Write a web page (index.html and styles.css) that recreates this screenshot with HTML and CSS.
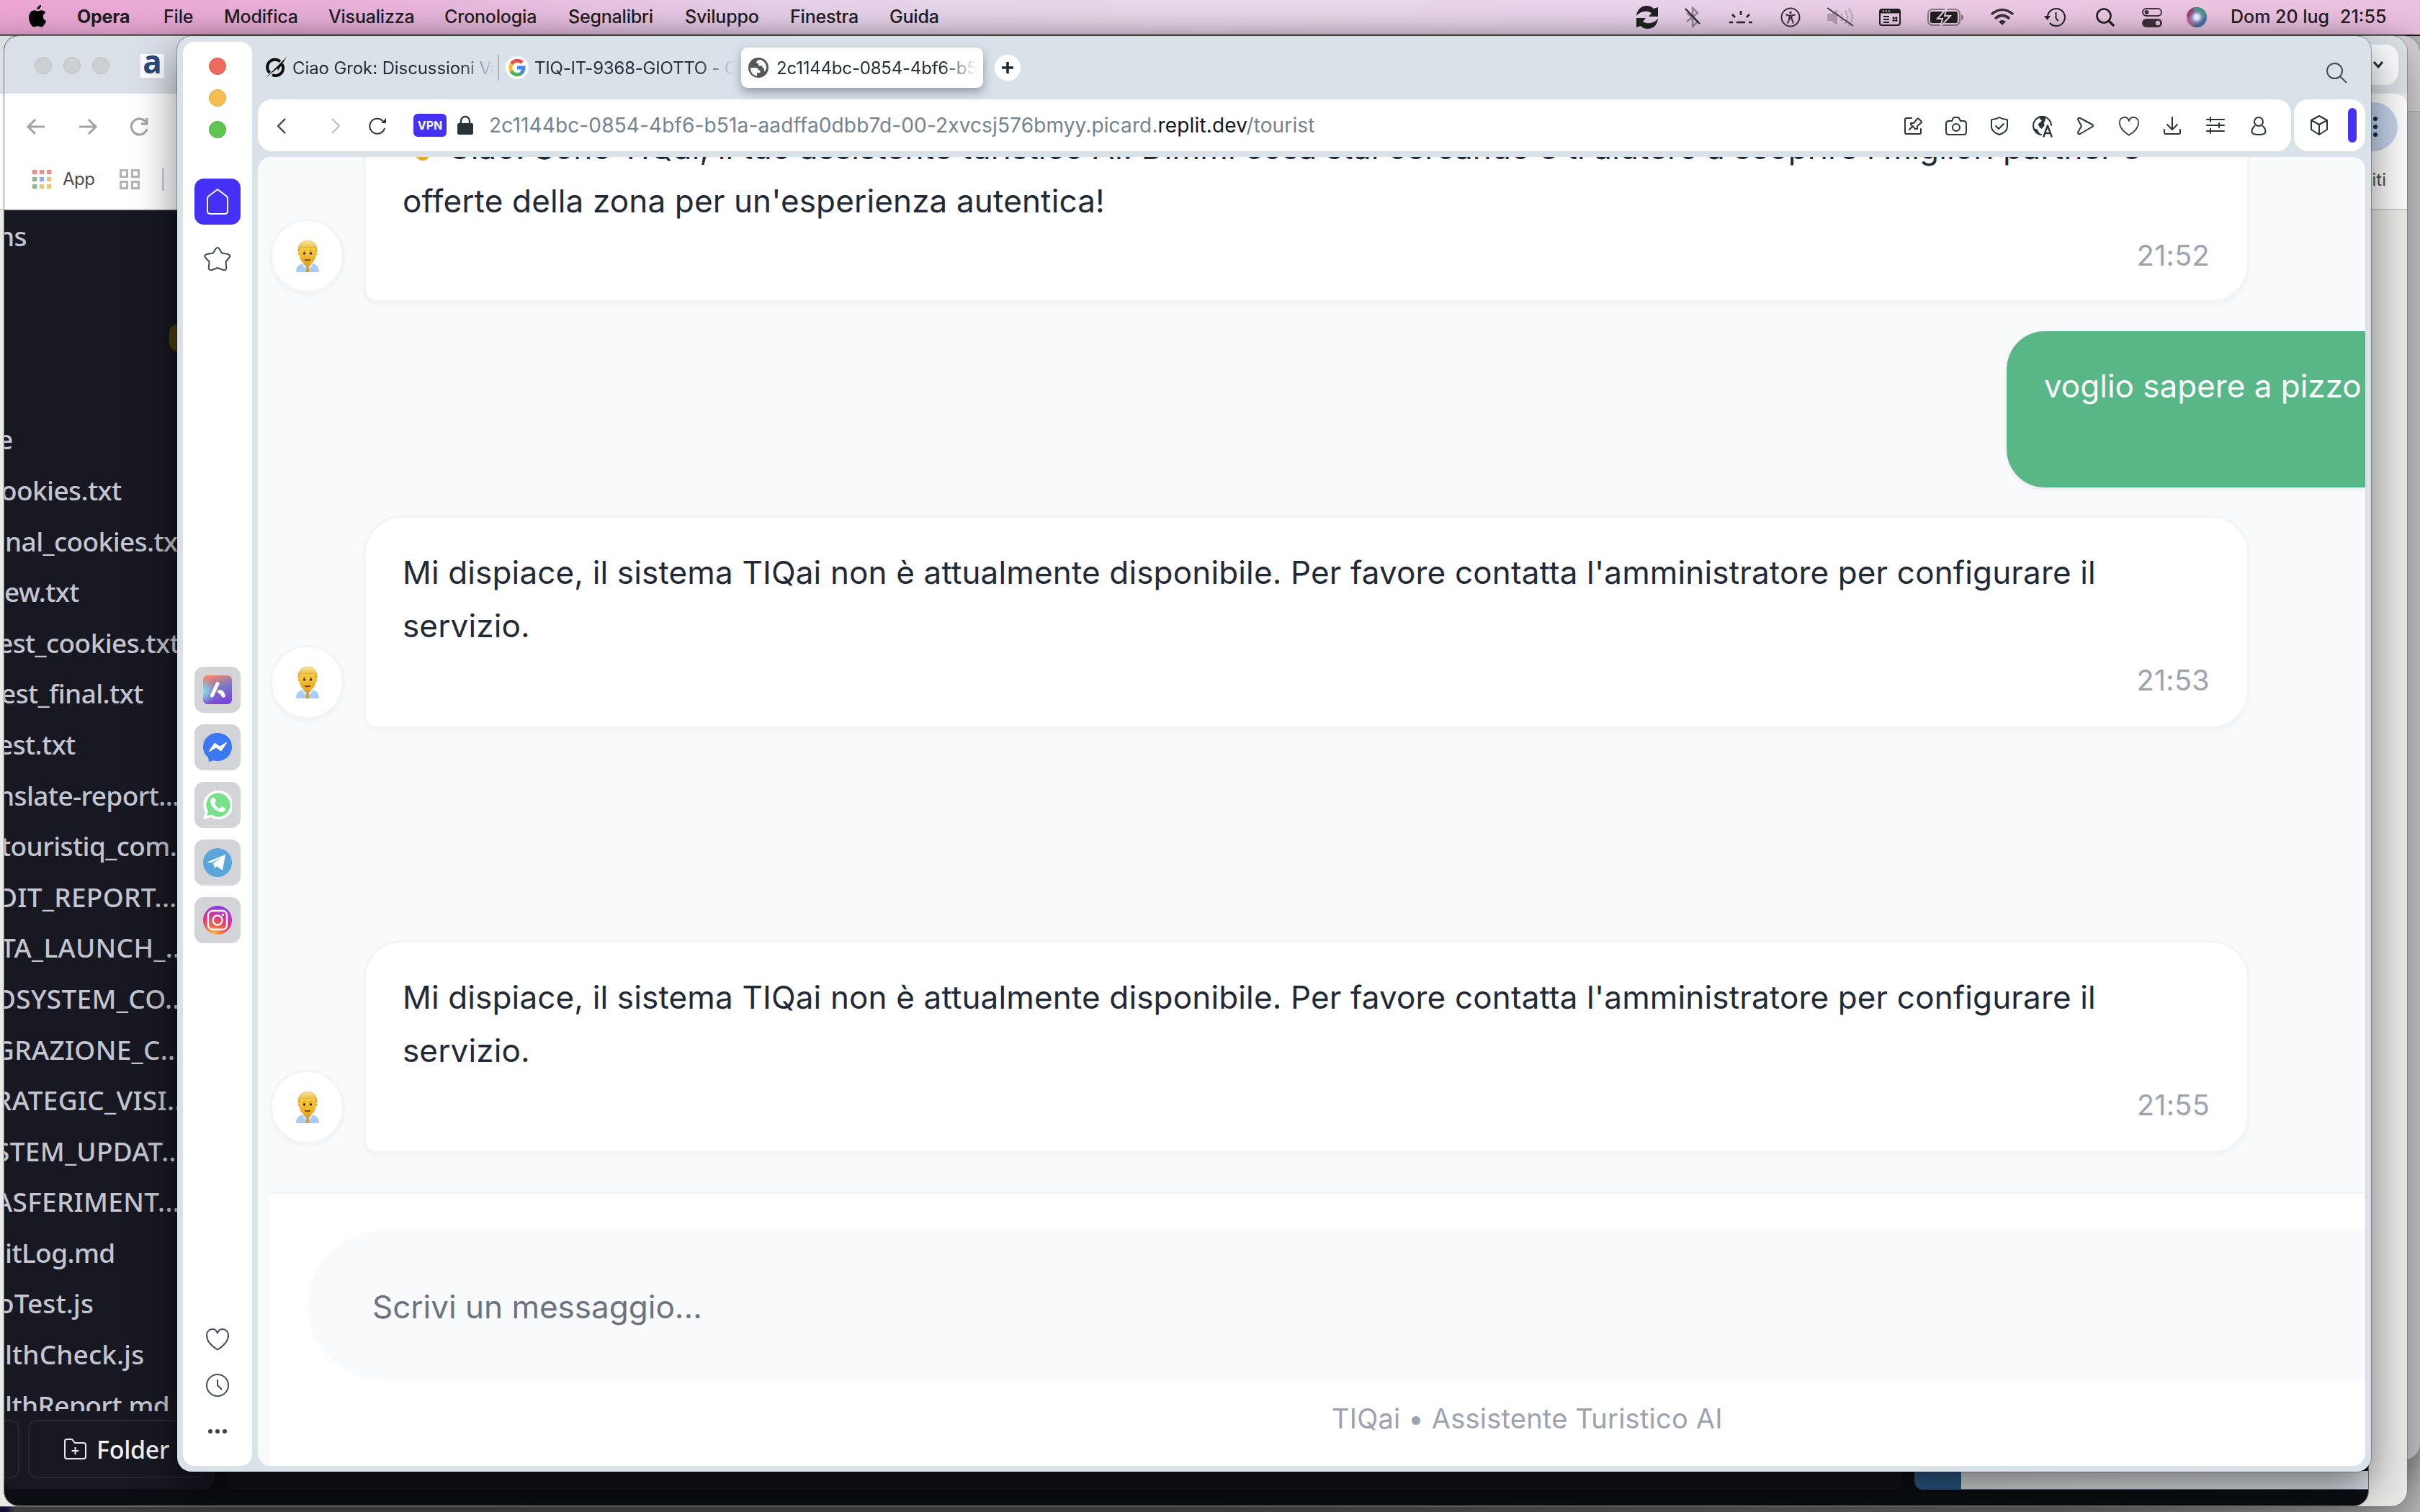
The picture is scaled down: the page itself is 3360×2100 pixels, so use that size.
FILE: index.html
```html
<!DOCTYPE html>
<html lang="it">
<head>
<meta charset="utf-8">
<title>TIQai</title>
<link rel="stylesheet" href="styles.css">
</head>
<body>
<svg class="defs" width="0" height="0">
  <defs>
    <linearGradient id="hair" x1="0" y1="0" x2="0" y2="1"><stop offset="0" stop-color="#fbe68c"/><stop offset="1" stop-color="#dba22c"/></linearGradient>
    <linearGradient id="face" x1="0" y1="0" x2="0" y2="1"><stop offset="0" stop-color="#fdd33d"/><stop offset="1" stop-color="#e8a425"/></linearGradient>
    <linearGradient id="aria" x1=".3" y1="0" x2=".6" y2="1"><stop offset="0" stop-color="#f08a62"/><stop offset=".45" stop-color="#7d78c4"/><stop offset="1" stop-color="#7a45dc"/></linearGradient>
    <radialGradient id="ariaGlow" cx="0" cy=".55" r=".45"><stop offset="0" stop-color="#8ee3f0"/><stop offset="1" stop-color="#8ee3f0" stop-opacity="0"/></radialGradient>
    <radialGradient id="insta" cx=".35" cy="1" r="1.05"><stop offset="0" stop-color="#fbc94a"/><stop offset=".3" stop-color="#f2694a"/><stop offset=".6" stop-color="#e0357f"/><stop offset=".85" stop-color="#b436d4"/><stop offset="1" stop-color="#6a3cf5"/></radialGradient>
    <radialGradient id="siri"><stop offset="0" stop-color="#fff"/><stop offset=".3" stop-color="#d6e4f5"/><stop offset=".65" stop-color="#8b8fd0" stop-opacity=".5"/><stop offset="1" stop-color="#5b6fa0" stop-opacity="0"/></radialGradient>
    <symbol id="man" viewBox="0 0 32 44">
      <path d="M0 44c0-8 4-11 10-12l6 2 6-2c6 1 10 4 10 12z" fill="#a9cdf0"/>
      <path d="M10 32l6 5 6-5 1 3-5 5-2-2-2 2-5-5z" fill="#d5e8fa"/>
      <path d="M14.500 36h3l1 8h-5z" fill="#d49a35"/>
      <path d="M11 27h10v6l-5 4-5-4z" fill="#dc9a22"/>
      <path d="M4.500 8h23v12c0 7-5.500 13.500-11.500 13.500S4.500 27 4.500 20z" fill="url(#face)"/>
      <circle cx="4.500" cy="18.500" r="2" fill="#f0b52f"/><circle cx="27.500" cy="18.500" r="2" fill="#f0b52f"/>
      <path d="M3 16C2 6 7 .5 16 .5S30 6 29 16l-1.800-1c0-3-.7-4.500-1.700-6-6 1.500-14 1.500-18.500 0-1 1.500-2 3-2.200 6z" fill="url(#hair)" stroke="#d9a336" stroke-width=".6"/>
      <path d="M9.500 14.500h4M18.500 14.500h4" stroke="#b07a20" stroke-width="1.200"/>
      <circle cx="11.500" cy="18" r="1.700" fill="#33230f"/><circle cx="20.500" cy="18" r="1.700" fill="#33230f"/>
      <path d="M12 26.500q4 1.800 8 0" stroke="#6b3c12" stroke-width="1.800" fill="none"/>
    </symbol>
  </defs>
</svg>

<header class="menubar">
  <nav class="menus">
    <svg width="28" height="34" viewBox="0 0 28 34"><path d="M19 1c.3 3-2.500 6.500-5.700 6.500C13 4.500 15.700 1.500 19 1zM14 9.500c1.300 0 3-1.300 5.500-1.300 2.200 0 4.400 1.200 5.700 3.200-5 3-4 9.800.9 11.700-1.300 3.700-4 8.400-6.800 8.400-2 0-2.700-1.200-5-1.200-2.400 0-3.200 1.200-5 1.200C6 31.500 2 24.500 2 18.500c0-6.500 4-10.200 7.500-10.200 2 0 3.500 1.200 4.500 1.200z"/></svg>
    <b>Opera</b><span>File</span><span>Modifica</span><span>Visualizza</span><span>Cronologia</span><span>Segnalibri</span><span>Sviluppo</span><span>Finestra</span><span>Guida</span>
  </nav>
  <div class="status">
    <svg width="32" height="34" viewBox="0 0 32 34"><path d="M1 15C2 6 8 1 15 1c4 0 7 1 10 4l6-2v13H18l4-5c-6-4-15-3-21 4zM31 19c-1 9-7 14-14 14-4 0-7-1-10-4l-6 2V18h13l-4 5c6 4 15 3 21-4z"/></svg>
    <svg width="24" height="30" viewBox="0 0 24 30" fill="none"><path d="M4 9l15 12-7 7V2l7 7L4 21" stroke="#928296" stroke-width="2.500"/><path d="M2 3l20 21" stroke="#222" stroke-width="2"/></svg>
    <svg width="34" height="20" viewBox="0 0 34 20" fill="none" stroke="#222" stroke-width="2.600"><path d="M17 1v6M5 6l4 4M29 6l-4 4M1 17h5M11 17h12M28 17h5"/></svg>
    <svg width="28" height="28" viewBox="0 0 28 28" fill="none" stroke="#3a3139" stroke-width="2"><circle cx="14" cy="14" r="12.500"/><circle cx="14" cy="7.500" r="1.300" fill="#3a3139" stroke-width="1"/><path d="M7.500 10.500l5 1v4l-2.500 7M20.500 10.500l-5 1v4l2.500 7M12 11.500h4M12.500 15h3"/></svg>
    <svg width="38" height="30" viewBox="0 0 38 30" fill="none" stroke="#b79fb5" stroke-width="2.400"><path d="M1 10h6l8-6v22l-8-6H1z" fill="#b79fb5" stroke="none"/><path d="M20 10q3 5 0 10M26 6q6 9 0 18M31 3q9 12 0 24" stroke-dasharray="3 1"/><path d="M1 2l36 25" stroke="#51464f" stroke-width="2"/></svg>
    <svg width="30" height="26" viewBox="0 0 30 26" fill="none" stroke="#222" stroke-width="2"><rect x="1" y="2" width="28" height="22" rx="3"/><path d="M2 5h26" stroke-width="5"/><path d="M5 4.500h2M9 4.500h2M13 4.500h2" stroke="#eccce4"/><path d="M6 12h8M6 16h8M6 20h8"/><path d="M20 12v7M24 12v7M18.500 14h7M18.500 17.500h7" stroke-width="1.500"/></svg>
    <svg width="52" height="28" viewBox="0 0 52 28"><rect x="2" y="3" width="44" height="22" rx="6" fill="none" stroke="#8a7888" stroke-width="2"/><rect x="5" y="6" width="38" height="16" rx="3" fill="#222"/><path d="M48 10v8q3-1 3-4t-3-4" fill="#8a7888"/><path d="M28 1L15 16h7l-3 11 14-15h-8z" fill="#222" stroke="#eccce4" stroke-width="2"/></svg>
    <svg width="34" height="26" viewBox="0 0 34 26" fill="none" stroke="#3a3139" stroke-width="3.600"><path d="M2 9q15-13 30 0M7 15q10-9 20 0"/><path d="M12 19q5-4 10 0l-5 5z" fill="#3a3139" stroke="none"/></svg>
    <svg width="30" height="28" viewBox="0 0 30 28" fill="none" stroke="#222" stroke-width="2"><path d="M5 13a12 12 0 1 1 3 9M16.500 7v8l3 4"/><path d="M0 12h9l-4.500 6z" fill="#222" stroke="none"/></svg>
    <svg width="28" height="28" viewBox="0 0 28 28" fill="none" stroke="#222" stroke-width="2.600"><circle cx="12" cy="12" r="9.500"/><path d="M19 19l7 7" stroke-width="3.400"/></svg>
    <svg width="28" height="28" viewBox="0 0 28 28" fill="none" stroke="#3e343d" stroke-width="2"><rect x="1" y="2" width="26" height="10" rx="5"/><circle cx="6.500" cy="7" r="3" fill="#3e343d" stroke="none"/><rect x="1" y="17" width="26" height="10" rx="5" fill="#3e343d"/><circle cx="22" cy="22" r="3.200" fill="#eac4e0" stroke="none"/></svg>
    <svg width="28" height="28" viewBox="0 0 28 28"><circle cx="14" cy="14" r="14" fill="#4a6f9a"/><path d="M14 14L0 14A14 14 0 0 1 11 0z" fill="#a83a68"/><path d="M14 14L9 1A14 14 0 0 1 28 14z" fill="#3c9a80"/><path d="M14 14L0 13a14 14 0 0 0 9 14z" fill="#c2669c"/><circle cx="14" cy="14" r="13" fill="url(#siri)"/></svg>
    <time class="clock"><span>Dom 20 lug</span><span>21:55</span></time>
  </div>
</header>

<div class="window far"></div>
<div class="window light">
  <div class="light-tabs"><div class="light-chip"><svg width="16" height="12" viewBox="0 0 16 12" fill="none" stroke="#1f2a33" stroke-width="3"><path d="M2 2l6 7 6-7"/></svg></div></div>
  <div class="light-tools"><div class="light-menu"><i></i><i></i><i></i></div></div>
  <div class="light-marks">iti</div>
</div>

<div class="window editor">
  <div class="ed-tabs"><i></i><i></i><i></i><div class="ed-fav">a</div></div>
  <div class="ed-tools">
    <svg width="28" height="28" viewBox="0 0 28 28"><path d="M26 14H4M13 4L3 14l10 10"/></svg>
    <svg width="28" height="28" viewBox="0 0 28 28"><path d="M2 14h22M15 4l10 10-10 10"/></svg>
    <svg width="28" height="28" viewBox="0 0 28 28"><path d="M24 17a11 11 0 1 1-2-10M24 2v8h-8"/></svg>
  </div>
  <div class="ed-marks">
    <svg width="26" height="26" viewBox="0 0 26 26"><path d="M0 0h6v6H0zM10 0h6v6h-6zM20 0h6v6h-6z" fill="#f08c82"/><path d="M0 10h6v6H0zM0 20h6v6H0z" fill="#86b98c"/><path d="M10 10h6v6h-6z" fill="#8ab0f0"/><path d="M20 10h6v6h-6zM10 20h6v6h-6zM20 20h6v6h-6z" fill="#efc27a"/></svg>
    <span>App</span>
    <svg width="28" height="28" viewBox="0 0 28 28" fill="none" stroke="#b4b4b4" stroke-width="3"><path d="M1.500 1.500h9v9h-9zM17.500 1.500h9v9h-9zM1.500 17.500h9v9h-9zM17.500 17.500h9v9h-9z"/></svg>
    <i></i>
  </div>
  <div class="ed-body">
    <div class="files">
      <p class="k8">ns</p><p></p><p class="badge"><em></em></p><p></p><p class="k8">e</p>
      <p class="k4">ookies.txt</p><p class="k0">nal_cookies.txt</p><p>ew.txt</p><p class="k8">est_cookies.txt</p><p class="k4">est_final.txt</p><p class="k8">est.txt</p><p class="k8">nslate-report...</p><p class="k4">touristiq_com...</p><p class="k8 caps">DIT_REPORT...</p><p class="k4 caps">TA_LAUNCH_...</p><p class="k12 caps">OSYSTEM_CO...</p><p class="k12 caps">GRAZIONE_C...</p><p class="k12 caps">RATEGIC_VISI...</p><p class="k12 caps">STEM_UPDAT...</p><p class="k12 caps">ASFERIMENT...</p><p class="k0">itLog.md</p><p class="k8 wide">oTest.js</p><p class="k0 wide">lthCheck.js</p><p class="k0">lthReport.md</p>
    </div>
    <div class="ed-actions"><div class="ed-btn cut"></div><div class="ed-btn"><svg width="34" height="32" viewBox="0 0 34 32" fill="none" stroke="#e8e9ee" stroke-width="2"><path d="M5 2h7l4 5h12q3 0 3 3v16q0 3-3 3H5q-3 0-3-3V5q0-3 3-3zM16.500 13v10M11.500 18h10"/></svg>Folder</div></div>
  </div>
  <div class="ed-foot"><div class="foot-panel"></div><div class="foot-blue"></div><div class="foot-gray"></div></div>
</div>

<main class="window opera">
  <aside class="side">
    <i class="light-dot red"></i><i class="light-dot yellow"></i><i class="light-dot green"></i>
    <div class="home"><svg width="34" height="38" viewBox="0 0 34 38" fill="none" stroke="#fff" stroke-width="2"><path d="M17 2L4.500 11.500Q3 13 3 15v17q0 4 4 4h20q4 0 4-4V15q0-2-1.500-3.500z" stroke-linejoin="round"/></svg></div>
    <svg class="star" width="38" height="36" viewBox="0 0 38 36" fill="none" stroke="#434c54" stroke-width="2" stroke-linejoin="round"><path d="M16.500 3.500q2.500-3 5 0l3.500 6 8.500 1.500q4 1.500 2 4.500l-5 6 .8 8.500q-.3 4-4 3L19 30l-8 3q-4 1-4.300-3l.8-8.500-5.500-6q-2-3 2-4.500L13 9.500z"/></svg>
    <div class="apps">
      <div><svg width="40" height="40" viewBox="0 0 40 40"><rect width="40" height="40" rx="6" fill="url(#aria)"/><rect width="40" height="40" rx="6" fill="url(#ariaGlow)"/><path d="M20 11.500L12.500 28" stroke="#fff" stroke-width="5" stroke-linecap="round"/><path d="M20 21q9-3 11 8-2 3-5 1-2-5-6-6z" fill="#fff"/></svg></div>
      <div><svg width="40" height="40" viewBox="0 0 40 40"><path d="M20 0c11.500 0 20 8 20 19s-8.500 20-20 20c-2 0-4-.3-6-.8L8 40l-1-6C2.500 30.500 0 25.500 0 19.500 0 8 8.500 0 20 0z" fill="#3a78f5"/><path d="M8 26l8-12 7 5 10-6-8 12-7-5z" fill="#fff" stroke="#fff" stroke-linejoin="round"/></svg></div>
      <div><svg width="40" height="40" viewBox="0 0 40 40"><path d="M20 0a20 20 0 1 1-9 37L0 40l3-10A20 20 0 0 1 20 0z" fill="#fff"/><path d="M20 3.500a16.500 16.500 0 1 1-8.500 30L5 35l2-6A16.500 16.500 0 0 1 20 3.500z" fill="#78e28a"/><path d="M13 10l3 0 2 5-2 3c2 4 4 6 7 7l3-3 5 3c0 3-3 5-6 5-8-1-15-9-15-15 0-2 1-4 3-5z" fill="#fff"/></svg></div>
      <div><svg width="40" height="40" viewBox="0 0 40 40"><circle cx="20" cy="20" r="20" fill="#5aa5da"/><path d="M5 19.500L31 9l-4 22-8-6-3 3-2-7 12-8-14 7z" fill="#fff"/></svg></div>
      <div><svg width="40" height="40" viewBox="0 0 40 40" fill="none" stroke="#fff" stroke-width="2.400"><circle cx="20" cy="20" r="20" fill="url(#insta)" stroke="none"/><rect x="7" y="7" width="26" height="26" rx="6"/><circle cx="20" cy="20" r="6.500"/><circle cx="27.500" cy="12.500" r="1.600" fill="#fff" stroke="none"/></svg></div>
    </div>
    <div class="side-foot">
      <svg width="34" height="32" viewBox="0 0 34 32"><path d="M17 8C16 4 13.500 2 10 2c-5 0-8 4-8 8.500C2 19 8 25 17 30.500 26 25 32 19 32 10.500 32 6 29 2 24 2c-3.500 0-6 2-7 6z"/></svg>
      <svg width="34" height="34" viewBox="0 0 34 34"><circle cx="17" cy="17" r="15"/><path d="M17 9v8l6 6"/></svg>
      <svg width="28" height="8" viewBox="0 0 28 8" class="dots"><circle cx="4" cy="4" r="3"/><circle cx="14" cy="4" r="3"/><circle cx="24" cy="4" r="3"/></svg>
    </div>
  </aside>

  <section class="pane">
    <div class="tabs">
      <div class="tab grok"><svg width="32" height="32" viewBox="0 0 32 32" fill="none" stroke="#0b0b0b" stroke-width="4"><path d="M7.500 23A10.500 10.500 0 0 1 22 7.500M11 26A10.500 10.500 0 0 0 24.500 11"/><path d="M1 31L31 1 19 20l-1-3z" fill="#0b0b0b" stroke="none"/></svg><span>Ciao Grok: Discussioni Var</span></div>
      <i class="sep"></i>
      <div class="tab google"><svg width="32" height="32" viewBox="0 0 32 32" fill="none" stroke-width="5"><circle cx="16" cy="16" r="16" fill="#fff"/><path d="M23 9A9.500 9.500 0 0 0 8 11" stroke="#e94f43"/><path d="M8.500 10.500a9.500 9.500 0 0 0 0 11" stroke="#f5bb2e"/><path d="M8 21a9.500 9.500 0 0 0 13.500 3" stroke="#4caf58"/><path d="M21 24a9.500 9.500 0 0 0 4-8h-9" stroke="#4688f2"/></svg><span>TIQ-IT-9368-GIOTTO - Cerca</span></div>
      <div class="tab active"><svg width="28" height="28" viewBox="0 0 28 28"><circle cx="14" cy="14" r="14" fill="#55585b"/><path d="M4 14h6q4 0 4 3.500h2.500V21H12v4.500C6.500 25 3 20 3 14.500zM15 3q-4 1-4 5h3v3.500h5.500v3H22v5q3-2 3-6Q25 6 17 3z" fill="#fff"/></svg><span>2c1144bc-0854-4bf6-b51a</span></div>
      <div class="plus"><svg width="16" height="16" viewBox="0 0 16 16" stroke="#222b31" stroke-width="3.600"><path d="M8 0v16M0 8h16"/></svg></div>
      <svg class="find" width="30" height="30" viewBox="0 0 30 30" fill="none" stroke="#434a50" stroke-width="2"><circle cx="12.500" cy="12.500" r="10.500"/><path d="M20 20l9 9"/></svg>
    </div>

    <div class="bar">
      <div class="address">
        <div class="nav">
          <svg width="14" height="22" viewBox="0 0 14 22"><path d="M12 1L2 11l10 10"/></svg>
          <svg width="14" height="22" viewBox="0 0 14 22" class="off"><path d="M2 1l10 10L2 21"/></svg>
          <svg width="26" height="26" viewBox="0 0 26 26"><path d="M23 16A10.500 10.500 0 1 1 20.500 6"/><path d="M18 9h7V2z" fill="#2a333a" stroke="none"/></svg>
        </div>
        <b class="vpn">VPN</b>
        <svg class="lock" width="22" height="28" viewBox="0 0 22 28"><rect y="11" width="22" height="16" rx="2.500" fill="#2a333a"/><path d="M5 12V8a6 6 0 0 1 12 0v4" fill="none" stroke="#2a333a" stroke-width="2.400"/></svg>
        <div class="url">2c1144bc-0854-4bf6-b51a-aadffa0dbb7d-00-2xvcsj576bmyy.picard.<strong>replit.dev</strong>/tourist</div>
        <div class="tools">
          <svg width="28" height="28" viewBox="0 0 28 28"><path d="M12 3H5Q3 3 3 5v18q0 2 2 2h18q2 0 2-2v-5M9 19l5-5M11 10l4 0 5-6q1-1 2 0l3.500 3.500q1 1 0 2L20 14v4l-3 0-6-6z"/></svg>
          <svg width="30" height="28" viewBox="0 0 30 28"><path d="M5 7h4l2-4q1-1 2-1h4q1 0 2 1l2 4h4q4 0 4 4v11q0 4-4 4H5q-4 0-4-4V11q0-4 4-4z"/><circle cx="15" cy="16" r="5"/></svg>
          <svg width="26" height="28" viewBox="0 0 26 28"><path d="M13 2q5 3 10 3 1 0 1 1v9q0 7-11 11Q2 22 2 15V6q0-1 1-1 5 0 10-3zM8 14l4 4 7-7"/></svg>
          <svg width="30" height="32" viewBox="0 0 30 32"><path d="M27 15A12.500 12.500 0 1 0 13 28"/><path d="M11 2.500q5-1 8 1l-1 5-1.500 3 .5 4-3.500 4q-4-2-4-6.500l3-2 2-3-3-2zM3.500 20q4 0 4.500 2l3 5.500q-5-1-7.500-7.500z" fill="#2a333a" stroke-width="1"/><path d="M16.500 30.500l5.500-15 5.500 15M18.500 26h7" stroke-width="2.400"/></svg>
          <svg width="26" height="28" viewBox="0 0 26 28"><path d="M2 5q0-3 3-2l17 9q2 2 0 3L5 25q-3 1-3-2l5-9z"/></svg>
          <svg width="32" height="28" viewBox="0 0 34 32"><path d="M17 8C16 4 13.500 2 10 2c-5 0-8 4-8 8.500C2 19 8 25 17 30.500 26 25 32 19 32 10.500 32 6 29 2 24 2c-3.500 0-6 2-7 6z"/></svg>
          <svg width="26" height="28" viewBox="0 0 26 28"><path d="M13 2v16M6 12l7 7 7-7M2 19v4q0 2 2 2h18q2 0 2-2v-4"/></svg>
          <svg width="26" height="28" viewBox="0 0 26 28"><path d="M1 5h24M1 13h24M1 21h24M6 2v6M18 10v6M6 18v6"/></svg>
          <svg width="24" height="28" viewBox="0 0 24 28"><circle cx="12" cy="8" r="6"/><path d="M6.500 14q-4 3-4 8 0 4 9.500 4t9.500-4q0-5-4-8"/></svg>
        </div>
      </div>
      <div class="extra">
        <svg width="28" height="30" viewBox="0 0 28 30"><path d="M14 2l11 6v13l-11 7-11-7V8zM3 8l11 6 11-6M14 14v14"/></svg>
        <i></i>
      </div>
    </div>

    <div class="page">
      <div class="chat">
        <div class="row">
          <div class="avatar"><svg width="32" height="44"><use href="#man"/></svg></div>
          <div class="bubble intro"><p class="line"><svg width="50" height="46" viewBox="0 0 50 46"><path d="M10 22L5 36l4 2" stroke="#777" stroke-width="2" fill="none"/><path d="M16 12q12-10 22 2 8 10 2 20-5 10-12 10-6 0-12-8-6-12 0-24z" fill="url(#face)"/></svg> Ciao! Sono TIQai, il tuo assistente turistico AI. Dimmi cosa stai cercando e ti aiuterò a scoprire i migliori partner e</p><p class="line">offerte della zona per un'esperienza autentica!</p><time>21:52</time></div>
        </div>
        <div class="mine"><p class="line">voglio sapere a pizzo</p></div>
        <div class="row">
          <div class="avatar"><svg width="32" height="44"><use href="#man"/></svg></div>
          <div class="bubble"><p class="line">Mi dispiace, il sistema TIQai non è attualmente disponibile. Per favore contatta l'amministratore per configurare il</p><p class="line">servizio.</p><time>21:53</time></div>
        </div>
        <div class="row later">
          <div class="avatar"><svg width="32" height="44"><use href="#man"/></svg></div>
          <div class="bubble"><p class="line">Mi dispiace, il sistema TIQai non è attualmente disponibile. Per favore contatta l'amministratore per configurare il</p><p class="line">servizio.</p><time>21:55</time></div>
        </div>
      </div>
      <footer class="compose">
        <div class="field">Scrivi un messaggio...</div>
        <div class="brand">TIQai • Assistente Turistico AI</div>
      </footer>
    </div>
  </section>
</main>
</body>
</html>
```
FILE: styles.css
```css
* { box-sizing: border-box; }
body {
  margin: 0; width: 3360px; height: 2100px; position: relative; overflow: hidden;
  font-family: Inter, "Liberation Sans", sans-serif;
  background: linear-gradient(90deg, #1b1247 0, #1b1247 8px, #505050 20px, #555 1700px, #777 2900px, #b9b9b9 3360px);
}
p { margin: 0; }
svg { display: block; flex: none; }
.defs { position: absolute; }

/* menu bar */
.menubar {
  height: 50px; display: flex; justify-content: space-between; color: #221d22;
  background: linear-gradient(90deg, #eba5d4, #e9b3db 16%, #e5d2e9 34%, #e8d8e9 50%, #e7d3ea 67%, #ebcbe4 80%, #ebbfdf);
  border-bottom: 2px solid #16161a; font-size: 25px; font-weight: 450;
}
.menus { display: grid; grid-template-columns: 69px 120px 84px 145px 161px 172px 162px 146px 138px 100px; align-items: center; padding-left: 38px; padding-bottom: 2px; letter-spacing: -.2px; }
.menus b { font-weight: 700; }
.status { display: grid; grid-template-columns: 64px 62px 72px 66px 72px 66px 88px 70px 76px 64px 66px 58px 281px; align-items: center; justify-items: center; fill: #222; }
.clock { justify-self: start; display: flex; gap: 15px; padding-left: 18px; padding-bottom: 2px; }
.clock span { white-space: nowrap; }

/* background windows */
.window { position: absolute; overflow: hidden; }
.far { left: -20px; top: 50px; width: 3380px; height: 1978px; border-radius: 0 24px 24px 0; background: linear-gradient(#d8d0d8 104px, #b4b2b8 104px, #b4b2b8 106px, #c6c6cb 106px); box-shadow: 0 0 0 1px #8888, 0 20px 50px #0006; }
.light { left: -20px; top: 50px; width: 3362px; height: 2042px; border-radius: 0 22px 22px 0; background: #e9e9e7; box-shadow: 0 0 0 1px #777a, 0 20px 60px #0005; color: #46494c; }
.light-tabs { height: 80px; background: #d9dee3; display: flex; justify-content: flex-end; padding: 12px 12px; }
.light-chip { width: 56px; height: 56px; border-radius: 18px; background: #fafbfc; display: flex; align-items: center; padding-left: 20px; }
.light-tools { height: 84px; background: #fcfcfc; border-radius: 0 18px 0 0; padding: 12px 13px; display: flex; justify-content: flex-end; }
.light-menu { width: 68px; height: 68px; border-radius: 50%; background: #c5d3ea; display: flex; flex-direction: column; gap: 5px; align-items: center; justify-content: center; }
.light-menu i { width: 6px; height: 6px; border-radius: 50%; background: #13294d; margin-left: 5px; }
.light-marks { height: 78px; background: #fcfcfc; border-bottom: 2px solid #cfcfcf; font-size: 24px; padding: 21px 29px 0 0; text-align: right; }

.editor { left: 6px; top: 50px; width: 3282px; height: 2041px; border-radius: 20px; background: #0c0e13; box-shadow: 0 0 0 1px #777; }
.ed-tabs { height: 80px; background: #dae0e7; display: flex; gap: 16px; align-items: center; padding: 2px 0 0 42px; }
.ed-tabs i { width: 24px; height: 24px; border-radius: 50%; background: #cdd0d2; border: 1px solid #b9bcbf; }
.ed-fav { width: 33px; height: 33px; margin-left: 27px; background: #fff; color: #2a4b80; font: bold 44px/21px "Noto Sans", sans-serif; text-align: center; }
.ed-tools { height: 92px; background: #fff; display: flex; gap: 44px; align-items: center; padding-left: 30px; fill: none; stroke: #a2a2a2; stroke-width: 3; }
.ed-marks { height: 70px; background: #fff; display: flex; align-items: center; padding: 0 0 15px 39px; color: #4c4c4c; font-size: 24px; border-bottom: 2px solid #cfcfcf; }
.ed-marks span { width: 95px; padding-left: 16px; letter-spacing: -.5px; }
.ed-marks i { width: 3px; height: 32px; background: #c4d4f0; margin-left: 31px; }
.ed-body { width: 292px; background: #171821; height: 1776px; border-radius: 0 0 14px 14px; }
.files { height: 1668px; overflow: hidden; padding-top: 1px; color: #c3c5d0; font: 500 37px/70.6px "Noto Sans", sans-serif; white-space: nowrap; }
.files p { height: 70.6px; letter-spacing: -.6px; }
.files .caps { letter-spacing: .3px; }
.files .wide { letter-spacing: .1px; }
.files .badge { padding-top: 16px; }
.files em { display: block; width: 60px; height: 38px; margin-left: 229px; border-radius: 12px; background: #4a3c0e; }
.k0 { padding-left: 1px; }
.k4 { margin-left: -5px; }
.k8 { margin-left: -9px; }
.k12 { margin-left: -13px; }
.ed-actions { display: flex; gap: 12px; padding-top: 12px; }
.ed-btn { width: 245px; height: 81px; border: 2px solid #262832; border-radius: 12px; display: flex; gap: 12px; align-items: center; padding-left: 47px; color: #f2f3f7; font: 500 34px "Noto Sans", sans-serif; letter-spacing: -.3px; }
.ed-btn.cut { width: 32px; margin-left: -11px; flex: none; padding: 0; }
.ed-foot { height: 26px; margin-top: -25px; display: flex; padding-left: 310px; }
.foot-panel { width: 2325px; background: #13151a; border-radius: 0 0 12px 12px; }
.foot-blue { width: 65px; margin-left: 17px; background: #2b5c8a; border-radius: 0 0 0 12px; }
.foot-gray { flex: 1; background: linear-gradient(90deg, #e0e2e3, #e4e8eb 70%, #dfe7ee); border-bottom: 1px solid #56748b; }

/* front browser */
.opera {
  left: 246px; top: 50px; width: 3046px; height: 1994px; border-radius: 20px; background: #d9e1e9;
  box-shadow: 0 0 0 1px rgba(0,0,0,.3), 0 24px 60px rgba(0,0,0,.5);
  display: grid; grid-template-columns: 96px 1fr; gap: 8px; padding: 8px;
}
.side { background: #fff; border-radius: 16px; display: flex; flex-direction: column; align-items: center; padding-top: 22px; }
.light-dot { width: 24px; height: 24px; border-radius: 50%; margin-bottom: 20px; }
.red { background: #ec6a5e; border: 1px solid #d5574c; }
.yellow { background: #f4bf50; border: 1px solid #d8a23a; }
.green { background: #61c554; border: 1px solid #4fa944; }
.home { width: 64px; height: 64px; margin-top: 36px; border-radius: 13px; background: #4431f5; display: grid; place-items: center; }
.star { margin-top: 30px; }
.apps { margin-top: 548px; display: grid; gap: 16px; }
.apps div { width: 64px; height: 64px; border-radius: 13px; background: #d3d4d8; display: grid; place-items: center; }
.side-foot { margin-top: auto; display: flex; flex-direction: column; align-items: center; gap: 31px; padding-bottom: 44px; fill: none; stroke: #434c54; stroke-width: 2; }
.side-foot .dots { fill: #3a4249; stroke: none; margin-top: 12px; }

.pane { display: flex; flex-direction: column; min-width: 0; }
.tabs { height: 72px; margin-bottom: 8px; display: flex; align-items: center; padding-left: 9px; font-size: 24px; color: #262f36; letter-spacing: -.1px; }
.tab { display: flex; align-items: center; }
.tab span { overflow: hidden; white-space: nowrap; -webkit-mask-image: linear-gradient(90deg, #000 83%, transparent); mask-image: linear-gradient(90deg, #000 83%, transparent); }
.grok span { width: 281px; margin-left: 7px; }
.sep { width: 2px; height: 36px; background: #a9b1b9; margin-left: 4px; }
.google { margin-left: 9px; }
.google span { width: 277px; margin-left: 8px; letter-spacing: -.2px; }
.active { width: 336px; height: 56px; margin-left: 10px; padding-left: 10px; background: #fff; border-radius: 9px; box-shadow: 0 6px 14px rgba(60,70,85,.45); }
.active span { width: 278px; margin-left: 11px; letter-spacing: -.2px; }
.plus { width: 36px; height: 36px; margin-left: 16px; border-radius: 50%; background: #fff; display: grid; place-items: center; }
.find { margin: 14px 25px 0 auto; }

.bar { height: 72px; margin-bottom: 8px; display: flex; gap: 4px; }
.address { flex: 1; background: #fff; border-radius: 20px; display: flex; align-items: center; }
.nav { display: flex; align-items: center; padding: 2px 0 0 26px; fill: none; stroke: #2a333a; stroke-width: 2; }
.nav svg + svg { margin-left: 61px; }
.nav svg + svg + svg { margin-left: 38px; }
.nav .off { stroke: #b9bdc1; }
.vpn { width: 46px; height: 32px; margin-left: 37px; border-radius: 6px; background: #4431f5; color: #fff; font-size: 16px; line-height: 32px; text-align: center; }
.lock { margin-left: 15px; }
.url { margin-left: 22px; font-size: 28px; letter-spacing: .14px; color: #75828f; white-space: nowrap; }
.url strong { font-weight: 400; color: #11161a; }
.tools { margin-left: auto; padding: 1px 15px 0 0; display: grid; grid-template-columns: repeat(9, 60px); align-items: center; justify-items: center; fill: none; stroke: #2a333a; stroke-width: 2; stroke-linejoin: round; stroke-linecap: round; }
.extra { width: 99px; background: #fff; border-radius: 20px; display: flex; align-items: center; padding-left: 21px; fill: none; stroke: #2a333a; stroke-width: 2; stroke-linejoin: round; }
.extra i { width: 12px; height: 48px; border-radius: 6px; background: #4431f5; margin-left: 26px; }

/* chat page */
.page { flex: 1; min-height: 0; background: #f9fafc; border-radius: 18px; overflow: hidden; display: flex; flex-direction: column; color: #1f2937; }
.chat { height: 1437px; flex: none; overflow: hidden; display: flex; flex-direction: column; justify-content: flex-end; padding: 0 0 53px 17px; }
.row { display: flex; align-items: flex-end; gap: 27px; }
.avatar { width: 103px; height: 103px; flex: none; margin-bottom: 13px; border-radius: 50%; border: 3px solid #f3f4f6; background: #fff; display: grid; place-items: center; box-shadow: 0 3px 6px rgba(0,0,0,.04); }
.bubble { width: 2618px; height: 296px; flex: none; background: #fff; border: 3px solid #f3f4f6; border-radius: 53px 53px 53px 18px; padding: 40px 52px 0 51px; box-shadow: 0 3px 6px rgba(0,0,0,.04); }
.bubble.intro { padding-top: 42px; }
.line { font-size: 44px; line-height: 73.6px; letter-spacing: .15px; white-space: nowrap; }
.line svg { display: inline-block; vertical-align: -4px; }
.bubble time { display: block; text-align: right; font-size: 39.5px; letter-spacing: .3px; line-height: 52px; margin-top: 13px; color: #9ca3af; }
.mine { height: 217px; flex: none; margin: 40px 0 39px; align-self: flex-end; width: 498px; background: #58b687; border-radius: 53px 0 0 53px; padding: 40px 0 0 52px; color: #fff; box-shadow: 0 3px 6px rgba(0,0,0,.06); }
.mine .line { letter-spacing: 0; }
.later { margin-top: 294px; }
.compose { flex: 1; margin-left: 16px; background: #fff; border-top: 3px solid #f3f4f6; padding: 51px 0 0 53px; }
.field { height: 208px; border-radius: 104px 0 0 104px; background: #f9fafb; line-height: 212px; padding-left: 90px; font-size: 44px; color: #6b7280; }
.brand { margin-top: 28px; margin-left: -53px; padding-left: 1475px; font-size: 38px; letter-spacing: .22px; line-height: 50px; color: #9ca3af; }
```
